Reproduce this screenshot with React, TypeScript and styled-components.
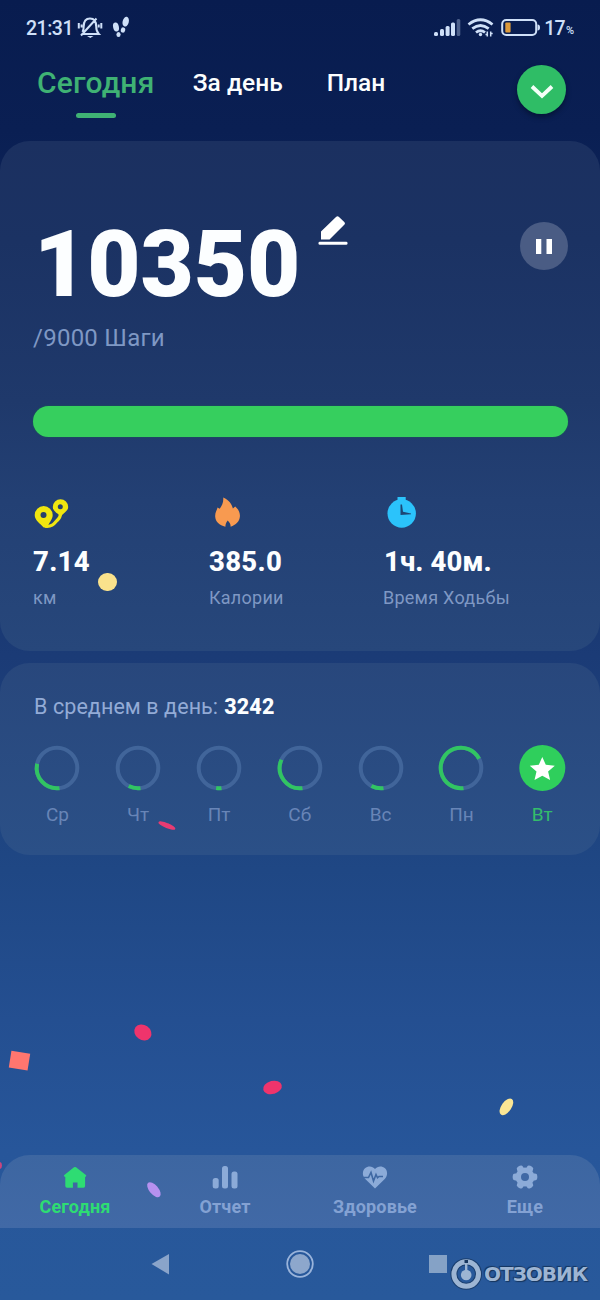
import React from 'react';
import styled, { createGlobalStyle } from 'styled-components';

const Global = createGlobalStyle`
  * { box-sizing: border-box; }
  body { margin: 0; background: #081b4f; font-family: Roboto, "Liberation Sans", sans-serif; }
`;

const Screen = styled.div`
  position: relative;
  width: 600px;
  height: 1300px;
  overflow: hidden;
  display: flex;
  flex-direction: column;
  background: linear-gradient(#081c4f 0, #0a1f53 130px, #1b3b76 656px, #1f4784 870px, #244f91 1020px, #27569a 1150px, #28599b 1300px);
`;

const Text = styled.span<{ $size: number; $line: number; $weight?: number; $color?: string; $track?: number; $top?: number; $left?: number }>`
  display: block;
  margin: ${(p) => p.$top ?? 0}px 0 0 ${(p) => p.$left ?? 0}px;
  white-space: pre;
  font-size: ${(p) => p.$size}px;
  line-height: ${(p) => p.$line}px;
  font-weight: ${(p) => p.$weight ?? 400};
  color: ${(p) => p.$color ?? '#fcfeff'};
  letter-spacing: ${(p) => p.$track ?? 0}px;
`;

const Icon = styled.svg<{ $left?: number }>`
  display: block;
  flex: none;
  overflow: visible;
  margin-left: ${(p) => p.$left ?? 0}px;
`;

const StatusBar = styled.header`
  height: 55px;
  padding: 16px 26px 0 26px;
  display: flex;
  justify-content: space-between;
`;

const StatusGroup = styled.div`
  display: flex;
  height: 24px;
  align-items: center;
`;

const Tabs = styled.nav`
  height: 86px;
  padding: 10px 34px 0 37px;
  display: flex;
  align-items: flex-start;
`;

const Tab = styled.div<{ $gap?: number }>`
  margin-right: ${(p) => p.$gap ?? 0}px;
  display: flex;
  flex-direction: column;
  align-items: center;
`;

const TabMark = styled.div`
  width: 40px;
  height: 5px;
  margin-top: 12px;
  border-radius: 3px;
  background: #3fb274;
`;

const RoundButton = styled.button<{ $size: number; $fill: string; $shadow?: boolean }>`
  width: ${(p) => p.$size}px;
  height: ${(p) => p.$size}px;
  flex: none;
  margin: 0 0 0 auto;
  padding: 0;
  border: 0;
  border-radius: 50%;
  background: ${(p) => p.$fill};
  box-shadow: ${(p) => (p.$shadow ? '0 3px 5px rgba(0, 12, 34, 0.55)' : 'none')};
  display: flex;
  align-items: center;
  justify-content: center;
`;

const StepsCard = styled.section`
  height: 510px;
  border-radius: 30px;
  padding: 75px 32px 0 33px;
  background: linear-gradient(#1b3060 0, #1b3263 100px, #1f396b 260px, #234074 360px, #27477b 510px);
`;

const CountRow = styled.div`
  height: 107px;
  display: flex;
  align-items: flex-start;
`;

const Count = styled(Text)`
  width: 266px;
`;

const PauseWrap = styled.div`
  margin: 6px 0 0 auto;
`;

const CountIcon = styled.div`
  margin-left: 18px;
`;

const Progress = styled.div`
  height: 31px;
  margin: 51.5px 0 60.5px;
  border-radius: 16px;
  background: #36cf5e;
  box-shadow: 0 0 2px #18624f;
`;

const Stats = styled.div`
  display: grid;
  grid-template-columns: 176px 174px 1fr;
`;

const Stat = styled.div`
  display: flex;
  flex-direction: column;
`;

const WeekCard = styled.section`
  height: 192px;
  margin-top: 12px;
  border-radius: 30px;
  padding: 31px 17px 0;
  background: linear-gradient(#28477c, #2b5087);
`;

const Average = styled.div`
  display: flex;
  gap: 6px;
  padding-left: 17px;
`;

const Week = styled.div`
  display: grid;
  grid-template-columns: repeat(7, 80.8px);
  margin-top: 26px;
`;

const Day = styled.div`
  display: flex;
  flex-direction: column;
  align-items: center;
  gap: 12px;
`;

const BottomNav = styled.nav`
  height: 73px;
  margin-top: auto;
  display: grid;
  grid-template-columns: repeat(4, 1fr);
  border-radius: 30px 30px 0 0;
  background: linear-gradient(#3d66a1, #4169a6);
`;

const NavItem = styled.div`
  display: flex;
  flex-direction: column;
  align-items: center;
  padding-top: 10px;
  gap: 7px;
`;

const SystemNav = styled.footer`
  height: 72px;
  padding: 21px 0 0 147px;
  display: flex;
  gap: 108px;
`;

const Confetto = styled.i<{ $x: number; $y: number; $w: number; $h: number; $turn?: number; $color: string; $round?: string }>`
  position: absolute;
  left: ${(p) => p.$x - p.$w / 2}px;
  top: ${(p) => p.$y - p.$h / 2}px;
  width: ${(p) => p.$w}px;
  height: ${(p) => p.$h}px;
  border-radius: ${(p) => p.$round ?? '50%'};
  background: ${(p) => p.$color};
  transform: rotate(${(p) => p.$turn ?? 0}deg);
`;

const Watermark = styled.div`
  position: absolute;
  left: 450px;
  top: 1258px;
  display: flex;
  align-items: center;
`;

const WatermarkText = styled.span`
  display: block;
  margin-left: 2px;
  font: 700 20px/32px "DejaVu Sans", sans-serif;
  letter-spacing: -1px;
  color: #9db5d3;
  text-shadow: 0 0 1px #16365f, 1px 1px 1px #16365f, -1px -1px 1px #16365f;
`;

const TINT = '#cfe0f8';
const MUTED = '#7f98c4';

const point = (deg: number, r = 20.3) => {
  const a = (deg * Math.PI) / 180;
  return `${(23 + r * Math.cos(a)).toFixed(2)} ${(23 + r * Math.sin(a)).toFixed(2)}`;
};

const Ring = ({ end }: { end: number }) => (
  <Icon width="46" height="46" viewBox="0 0 46 46" fill="none" strokeWidth="4">
    <circle cx="23" cy="23" r="20.3" stroke="#41659a" />
    <path d={`M${point(83)} A20.3 20.3 0 ${end - 83 > 180 ? 1 : 0} 1 ${point(end)}`} stroke="#31c562" />
  </Icon>
);

const StarBadge = () => (
  <Icon width="46" height="46" viewBox="0 0 46 46">
    <circle cx="23.3" cy="23" r="23" fill="#2fcf5c" />
    <path d="M23.300 12l3.500 7.800 9 1-6.700 5.800 2 8.400-7.800-4.300L15.500 35l2-8.400-6.700-5.800 9-1z" fill="#fff" />
  </Icon>
);

const days = [
  { name: 'Ср', end: 192 },
  { name: 'Чт', end: 117 },
  { name: 'Пт', end: 98 },
  { name: 'Сб', end: 204 },
  { name: 'Вс', end: 118 },
  { name: 'Пн', end: 333 },
];

const PinsIcon = () => (
  <Icon width="36" height="32" viewBox="33 496.500 36 32">
    <path d="M45 525.700c7 .8 9-2.200 11.500-5.200s4-2.500 4-8" fill="none" stroke="#f0e60f" strokeWidth="3.200" strokeLinejoin="round" />
    <path d="M43.700 505.500a9 9 0 0 1 9 9c0 5-4 7.500-5.500 12.500h-3.500c-3-3.500-9-7-9-12.500a9 9 0 0 1 9-9zM60.500 498.700a7.700 7.700 0 0 1 7.700 7.700c0 4-4.700 6-7.200 9.600-3-3-8.200-5.100-8.200-9.600a7.700 7.700 0 0 1 7.700-7.700z" fill="#f0e60f" />
    <circle cx="43.500" cy="514.500" r="3" fill="#26406c" />
    <circle cx="60.300" cy="506.300" r="2.500" fill="#26406c" />
  </Icon>
);

const FlameIcon = () => (
  <Icon width="36" height="32" viewBox="209 496.500 36 32">
    <path d="M223.200 497c6 2.500 8.500 6.500 9.700 11l2.300-2c3.500 3 5 6.500 4.700 10-.4 4.800-4 8.500-9.300 10.200.2-2.200-.8-4.200-2.900-6.200-1.600 1.800-2.300 3.900-2.300 6.200-6-1.500-9.900-5-10.200-10-.3-4 1.800-6.500 2.300-9.200l2.200 1.200c2.500-3 4-7 3.500-11.200z" fill="#f89a50" />
  </Icon>
);

const ClockIcon = () => (
  <Icon width="36" height="32" viewBox="383.500 496.500 36 32">
    <path d="M398 496.500h8.200v3h-8.200z" fill="#2bc3fb" />
    <circle cx="402.200" cy="513" r="14.200" fill="#2bc3fb" />
    <path d="M401 504h1.500l1 7.300 8 1.600v.8l-10.500.700z" fill="#1d4775" />
  </Icon>
);

export default function App() {
  return (
    <>
      <Global />
      <Screen>
        <StatusBar>
          <StatusGroup>
            <Text $size={19.5} $line={24} $weight={500} $color={TINT} $track={-0.5} $top={1}>21:31</Text>
            <Icon width="24" height="24" viewBox="78 16 24 24" $left={5} fill="none" stroke={TINT} strokeWidth="2">
              <path d="M82.500 34h16.300c-2-2-2.600-4-2.600-7.500 0-4.700-2-8-6.200-8s-6.300 3.300-6.300 8c0 2-.4 4-1.200 5.500M81 35.500L96.500 18.500M78.800 23v5.500M81.600 24.500v3M98.700 24.500v3M101.300 23v5.500" />
              <path d="M87 36h6.500l-3.200 2z" fill={TINT} stroke="none" />
            </Icon>
            <Icon width="18" height="24" viewBox="112 16 18 24" $left={10} fill={TINT}>
              <ellipse cx="116" cy="27" rx="2.900" ry="4.500" transform="rotate(-12 116 27)" />
              <ellipse cx="118.500" cy="34.500" rx="2.100" ry="2.500" />
              <ellipse cx="125.700" cy="21.700" rx="3.100" ry="5" transform="rotate(14 125.700 21.700)" />
              <ellipse cx="123" cy="30" rx="2.200" ry="2.700" transform="rotate(14 123 30)" />
            </Icon>
          </StatusGroup>
          <StatusGroup>
            <Icon width="27" height="24" viewBox="434 16 27 24" fill={TINT}>
              <rect x="434" y="32" width="4" height="4" rx="1.500" />
              <rect x="440" y="29" width="4" height="7" rx="1.500" />
              <rect x="445.600" y="26" width="4" height="10" rx="1.500" />
              <rect x="451" y="22.500" width="4" height="13.500" rx="1.500" />
              <rect x="456.700" y="19" width="3.600" height="17" rx="1.500" opacity=".35" />
            </Icon>
            <Icon width="26" height="24" viewBox="467 16 26 24" $left={6} fill="none" stroke={TINT} strokeWidth="2.800">
              <path d="M468.500 24.500q12-9.500 24 0M472.300 28.700q8.200-6.500 16.400 0M476 32.500q4.500-3.500 9 0" />
              <circle cx="480.500" cy="34.500" r="1.700" fill={TINT} stroke="none" />
              <path d="M487.300 31.500v5M490.700 31.500v5M485.500 34.500h2M490.700 33.500h2" strokeWidth="1.500" />
            </Icon>
            <Icon width="39" height="24" viewBox="501 16 39 24" $left={8}>
              <rect x="502.200" y="20" width="34" height="15" rx="4" fill="none" stroke={TINT} strokeWidth="2" />
              <rect x="505.300" y="22.500" width="5.300" height="10" rx="1" fill="#dc9a3c" />
              <path d="M537.500 24.500a2.500 3 0 0 1 0 6z" fill={TINT} />
            </Icon>
            <Text $size={19.5} $line={24} $weight={500} $color={TINT} $track={-0.8} $top={1} $left={4.5}>17</Text>
            <Text $size={11} $line={24} $weight={500} $color={TINT} $top={5} $left={1}>%</Text>
          </StatusGroup>
        </StatusBar>

        <Tabs>
          <Tab $gap={38.2}>
            <Text $size={30} $line={36} $weight={500} $color="#3fb274" $track={0.2}>Сегодня</Text>
            <TabMark />
          </Tab>
          <Tab $gap={44}>
            <Text $size={24.5} $line={35} $weight={500}>За день</Text>
          </Tab>
          <Tab>
            <Text $size={24.5} $line={35} $weight={500}>План</Text>
          </Tab>
          <RoundButton $size={49} $fill="#2fbd66" $shadow aria-label="Меню">
            <Icon width="24" height="16" viewBox="0 0 24 16" fill="none" stroke="#f4fff8" strokeWidth="3.800">
              <path d="M2 4.500l10 9.500 10-9.500" />
            </Icon>
          </RoundButton>
        </Tabs>

        <StepsCard>
          <CountRow>
            <Count $size={92} $line={97} $weight={900} $track={-0.1} $left={1}>10350</Count>
            <CountIcon>
              <Icon width="30" height="30" viewBox="318 216 30 30" fill="#fff">
                <path d="M321 239.500v-8L336 217q1.500-1.500 3 0l5.500 5.300q1 1.200 0 2.200L329.500 239.500z" />
                <rect x="318.500" y="241.700" width="29" height="3" rx="1.300" />
              </Icon>
            </CountIcon>
            <PauseWrap>
              <RoundButton $size={48} $fill="#4a5c84" aria-label="Пауза">
                <Icon width="16" height="15" viewBox="0 0 16 15" fill="#fff">
                  <path d="M0 0h5.300v15H0zM10.500 0H16v15h-5.500z" />
                </Icon>
              </RoundButton>
            </PauseWrap>
          </CountRow>
          <Text $size={24} $line={31} $color={MUTED} $track={0.25}>/9000 Шаги</Text>
          <Progress />
          <Stats>
            <Stat>
              <PinsIcon />
              <Text $size={27.5} $line={32} $weight={800} $track={0.3} $top={17}>7.14</Text>
              <Text $size={18} $line={24} $color={MUTED} $top={8} $track={0.2}>км</Text>
            </Stat>
            <Stat>
              <FlameIcon />
              <Text $size={27.5} $line={32} $weight={800} $track={0.3} $top={17}>385.0</Text>
              <Text $size={18} $line={24} $color={MUTED} $top={8} $track={0.25}>Калории</Text>
            </Stat>
            <Stat>
              <ClockIcon />
              <Text $size={27.5} $line={32} $weight={800} $track={0.1} $top={17} $left={1}>1ч. 40м.</Text>
              <Text $size={18} $line={24} $color={MUTED} $top={8} $track={0.25}>Время Ходьбы</Text>
            </Stat>
          </Stats>
        </StepsCard>

        <WeekCard>
          <Average>
            <Text $size={21.5} $line={25} $color="#93abd6" $track={0.08}>В среднем в день:</Text>
            <Text $size={21.5} $line={25} $weight={800} $track={0.2}>3242</Text>
          </Average>
          <Week>
            {days.map((d) => (
              <Day key={d.name}>
                <Ring end={d.end} />
                <Text $size={19} $line={23} $color="#6885b7">{d.name}</Text>
              </Day>
            ))}
            <Day>
              <StarBadge />
              <Text $size={19} $line={23} $color="#34bd6b">Вт</Text>
            </Day>
          </Week>
        </WeekCard>

        <BottomNav>
          <NavItem>
            <Icon width="24" height="24" viewBox="63 1165 24 24">
              <path d="M74 1167.300q1-.8 2 0l9.900 7.600q.8.900 0 1.700l-.8.300v9.200q0 1.700-1.600 1.700h-6v-5.200h-4.600v5.200H67q-1.700 0-1.700-1.700v-9.200l-1-.3q-.8-.8 0-1.700z" fill="#2edc73" />
            </Icon>
            <Text $size={18} $line={22} $weight={700} $color="#2edc73" $track={0.15}>Сегодня</Text>
          </NavItem>
          <NavItem>
            <Icon width="26" height="24" viewBox="212 1165 26 24" fill="#8cabd8">
              <rect x="212.700" y="1178" width="6" height="10.500" rx="2.500" />
              <rect x="222" y="1166" width="6" height="22.500" rx="2.500" />
              <rect x="231.500" y="1171.500" width="6" height="17" rx="2.500" />
            </Icon>
            <Text $size={18} $line={22} $weight={700} $color="#84a2d3" $track={0.15}>Отчет</Text>
          </NavItem>
          <NavItem>
            <Icon width="26" height="24" viewBox="362 1165 26 24">
              <path d="M375 1188.500l-10-9.700c-2.800-3-2.800-7.800 0-10.500 3-2.800 7.500-2.500 10 .7 2.500-3.200 7-3.500 10-.7 2.800 2.700 2.800 7.500 0 10.500z" fill="#8cabd8" />
              <path d="M362.500 1177.500h6l2.500-5 2.500 8.500 2.500-6.500 1.500 3.300 1.500-1.300h4" fill="none" stroke="#3f68a3" strokeWidth="1.600" />
            </Icon>
            <Text $size={18} $line={22} $weight={700} $color="#84a2d3" $track={0.15}>Здоровье</Text>
          </NavItem>
          <NavItem>
            <Icon width="26" height="24" viewBox="-13 -12 26 24" fill="#8cabd8">
              {[0, 60, 120].map((turn) => (
                <rect key={turn} x="-12.300" y="-3.400" width="24.600" height="6.800" rx="2.400" transform={`rotate(${turn})`} />
              ))}
              <circle r="9.400" />
              <circle r="4" fill="#4069a5" />
            </Icon>
            <Text $size={18} $line={22} $weight={700} $color="#84a2d3" $track={0.15}>Еще</Text>
          </NavItem>
        </BottomNav>

        <SystemNav>
          <Icon width="30" height="30" viewBox="0 0 30 30">
            <path d="M4.500 15L22 5v20.500z" fill="#8aa4ca" />
          </Icon>
          <Icon width="30" height="30" viewBox="0 0 30 30">
            <circle cx="15" cy="15" r="12.800" fill="none" stroke="#9ab4db" strokeWidth="1.800" />
            <circle cx="15" cy="15" r="10" fill="#8da7cc" />
          </Icon>
          <Icon width="30" height="30" viewBox="0 0 30 30">
            <path d="M6 6h18v18H6z" fill="#85a2c6" />
          </Icon>
        </SystemNav>

        <Confetto $x={107.5} $y={582} $w={18.5} $h={18.5} $color="#fae28c" />
        <Confetto $x={167} $y={825.3} $w={17.5} $h={4.5} $turn={22} $color="#e83b72" />
        <Confetto $x={143.2} $y={1032.7} $w={18} $h={14.5} $turn={35} $color="#ef346c" />
        <Confetto $x={272.2} $y={1087.7} $w={18.5} $h={13} $turn={-15} $color="#ef346c" />
        <Confetto $x={19.3} $y={1060} $w={18.5} $h={17} $turn={9} $color="#ff766f" $round="0" />
        <Confetto $x={506.5} $y={1107} $w={18.5} $h={10} $turn={-55} $color="#fbe694" />
        <Confetto $x={153.3} $y={1189} $w={17.5} $h={9} $turn={50} $color="#b691ef" />
        <Confetto $x={-1} $y={1165.5} $w={6} $h={7} $color="#c9467f" />

        <Watermark>
          <Icon width="32" height="32" viewBox="0 0 32 32" fill="none">
            <circle cx="16.200" cy="16" r="12.300" stroke="#16365f" strokeWidth="7" opacity=".75" />
            <circle cx="16.200" cy="16" r="12.300" stroke="#9db5d3" strokeWidth="5" />
            <circle cx="16.200" cy="17" r="5.300" fill="#9db5d3" />
            <path d="M16.200 5v8" stroke="#9db5d3" strokeWidth="2.400" />
            <path d="M14.500 2h3.500v3h-3.500z" fill="#16365f" />
          </Icon>
          <WatermarkText>ОТЗОВИК</WatermarkText>
        </Watermark>
      </Screen>
    </>
  );
}
